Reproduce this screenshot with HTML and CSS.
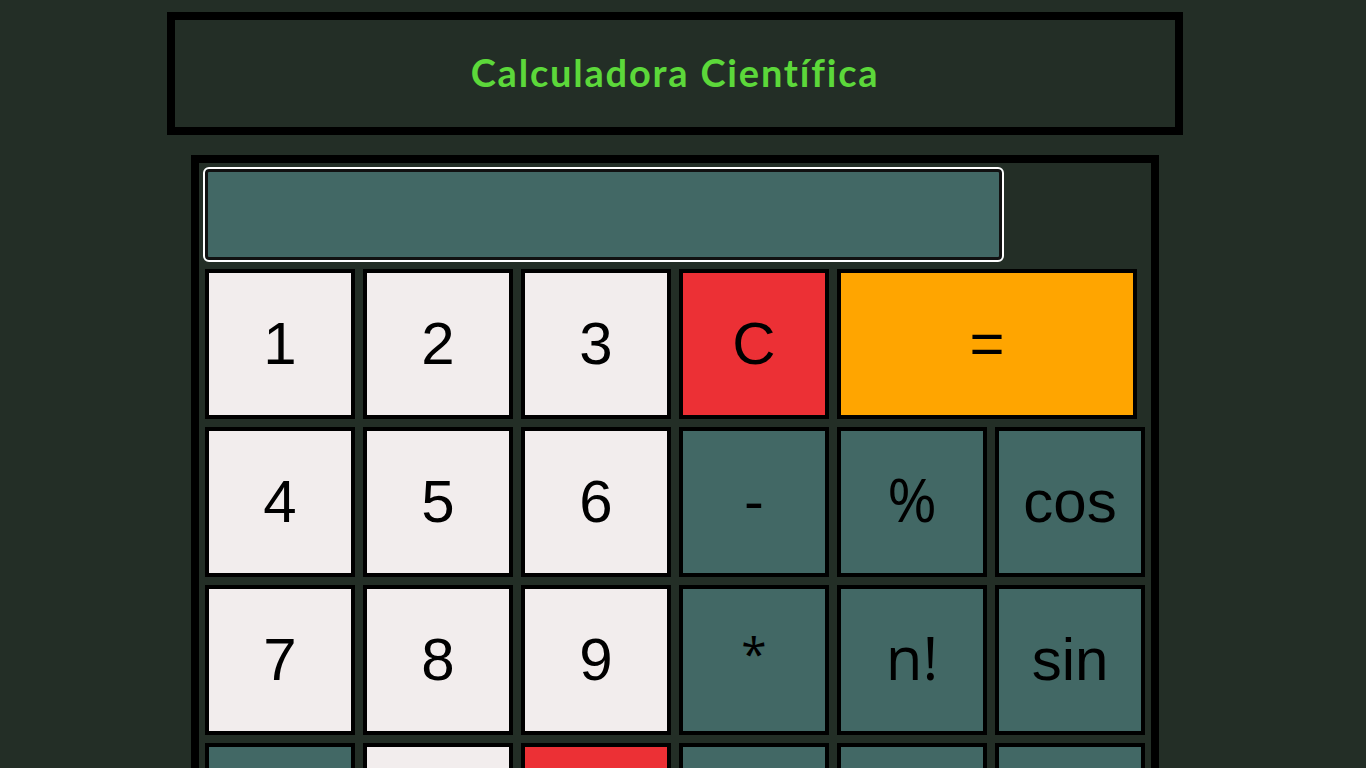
FILE: index.html
```html
<!DOCTYPE html>
<html lang="pt">
<head>
<meta charset="utf-8">
<title>Calculadora Científica</title>
<link rel="stylesheet" href="styles.css">
</head>
<body>
<div class="page">
  <header class="header">
    <h1 class="title">Calculadora Científica</h1>
  </header>
  <main class="calc">
    <div class="display"></div>
    <div class="keys">
      <button class="key num">1</button>
      <button class="key num">2</button>
      <button class="key num">3</button>
      <button class="key clear">C</button>
      <button class="key equal">=</button>
      <button class="key num">4</button>
      <button class="key num">5</button>
      <button class="key num">6</button>
      <button class="key op sym">-</button>
      <button class="key op sym">%</button>
      <button class="key op">cos</button>
      <button class="key num">7</button>
      <button class="key num">8</button>
      <button class="key num">9</button>
      <button class="key op sym star">*</button>
      <button class="key op sym">n!</button>
      <button class="key op">sin</button>
      <button class="key op">+</button>
      <button class="key num">0</button>
      <button class="key clear">←</button>
      <button class="key op">/</button>
      <button class="key op">√</button>
      <button class="key op">tan</button>
    </div>
  </main>
</div>
</body>
</html>
```

FILE: styles.css
```css
html, body {
  margin: 0;
  padding: 0;
  background: #232e26;
  overflow: hidden;
}

.page {
  width: 1350px;
  display: flex;
  flex-direction: column;
  align-items: center;
  padding-top: 12px;
}

.header {
  box-sizing: border-box;
  width: 1016px;
  height: 123px;
  border: 8px solid #000;
  display: flex;
  align-items: center;
  justify-content: center;
}

.title {
  margin: 0;
  font-family: "Lato", "Open Sans", sans-serif;
  font-weight: 700;
  font-size: 38px;
  letter-spacing: 1.8px;
  color: #5cd83a;
  position: relative;
  top: -2px;
}

.calc {
  box-sizing: border-box;
  width: 968px;
  margin-top: 20px;
  border: 8px solid #000;
  padding: 4px 6px 20px 4px;
}

.display {
  box-sizing: border-box;
  width: 801px;
  height: 95px;
  border: 2px solid #fff;
  border-radius: 6px;
  background: #426865;
  box-shadow: inset 0 0 0 3px #111;
}

.keys {
  margin-top: 7px;
  padding-left: 2px;
  display: grid;
  grid-template-columns: repeat(6, 150px);
  gap: 8px;
}

.key {
  box-sizing: border-box;
  width: 150px;
  height: 150px;
  margin: 0;
  padding: 0;
  border: 4px solid #000;
  border-radius: 0;
  font-family: "Liberation Sans", Arial, sans-serif;
  font-size: 60px;
  color: #000;
  line-height: 1;
  display: flex;
  align-items: center;
  justify-content: center;
}

.sym {
  font-family: "Open Sans", "Liberation Sans", sans-serif;
  padding-bottom: 6px;
}

.star {
  font-size: 46px;
  padding-bottom: 14px;
}

.num { background: #f2eded; }
.op { background: #426865; }
.clear { background: #ec3035; }
.equal {
  background: #ffa500;
  grid-column: span 2;
  width: 300px;
}
```
